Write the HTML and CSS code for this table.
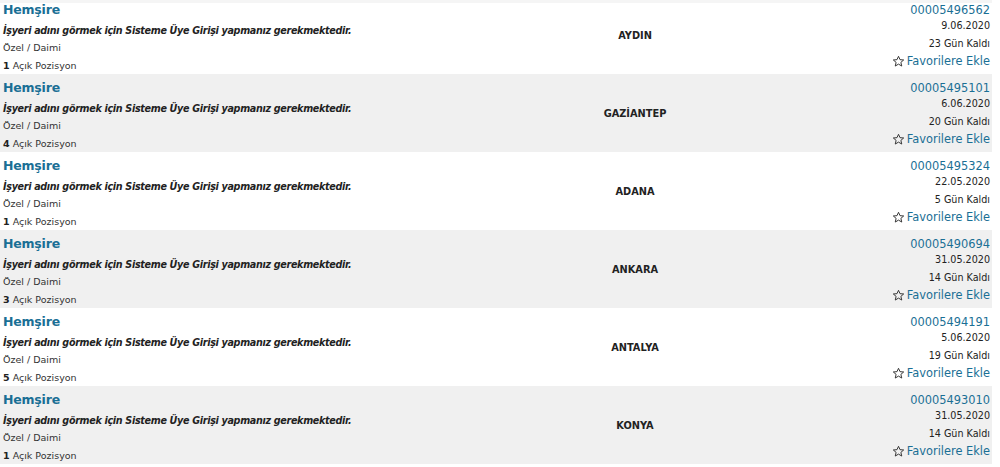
FILE: index.html
```html
<!DOCTYPE html>
<html lang="tr">
<head>
<meta charset="utf-8">
<link rel="stylesheet" href="styles.css">
</head>
<body>
<div class="list">
  <div class="row">
    <div class="info">
      <a class="title">Hemşire</a>
      <div class="firm">İşyeri adını görmek için Sisteme Üye Girişi yapmanız gerekmektedir.</div>
      <div class="meta">Özel / Daimi</div>
      <div class="meta"><b>1</b> Açık Pozisyon</div>
    </div>
    <div class="city">AYDIN</div>
    <div class="side">
      <a class="num">00005496562</a>
      <div class="small date">9.06.2020</div>
      <div class="small left">23 Gün Kaldı</div>
      <a class="fav"><svg class="star" viewBox="0 0 12 12"><path d="M6 1.2 7.4 4.3 10.8 4.6 8.2 6.8 9 10.2 6 8.4 3 10.2 3.8 6.8 1.2 4.6 4.6 4.3Z"/></svg>Favorilere Ekle</a>
    </div>
  </div>
  <div class="row alt">
    <div class="info">
      <a class="title">Hemşire</a>
      <div class="firm">İşyeri adını görmek için Sisteme Üye Girişi yapmanız gerekmektedir.</div>
      <div class="meta">Özel / Daimi</div>
      <div class="meta"><b>4</b> Açık Pozisyon</div>
    </div>
    <div class="city">GAZİANTEP</div>
    <div class="side">
      <a class="num">00005495101</a>
      <div class="small date">6.06.2020</div>
      <div class="small left">20 Gün Kaldı</div>
      <a class="fav"><svg class="star" viewBox="0 0 12 12"><path d="M6 1.2 7.4 4.3 10.8 4.6 8.2 6.8 9 10.2 6 8.4 3 10.2 3.8 6.8 1.2 4.6 4.6 4.3Z"/></svg>Favorilere Ekle</a>
    </div>
  </div>
  <div class="row">
    <div class="info">
      <a class="title">Hemşire</a>
      <div class="firm">İşyeri adını görmek için Sisteme Üye Girişi yapmanız gerekmektedir.</div>
      <div class="meta">Özel / Daimi</div>
      <div class="meta"><b>1</b> Açık Pozisyon</div>
    </div>
    <div class="city">ADANA</div>
    <div class="side">
      <a class="num">00005495324</a>
      <div class="small date">22.05.2020</div>
      <div class="small left">5 Gün Kaldı</div>
      <a class="fav"><svg class="star" viewBox="0 0 12 12"><path d="M6 1.2 7.4 4.3 10.8 4.6 8.2 6.8 9 10.2 6 8.4 3 10.2 3.8 6.8 1.2 4.6 4.6 4.3Z"/></svg>Favorilere Ekle</a>
    </div>
  </div>
  <div class="row alt">
    <div class="info">
      <a class="title">Hemşire</a>
      <div class="firm">İşyeri adını görmek için Sisteme Üye Girişi yapmanız gerekmektedir.</div>
      <div class="meta">Özel / Daimi</div>
      <div class="meta"><b>3</b> Açık Pozisyon</div>
    </div>
    <div class="city">ANKARA</div>
    <div class="side">
      <a class="num">00005490694</a>
      <div class="small date">31.05.2020</div>
      <div class="small left">14 Gün Kaldı</div>
      <a class="fav"><svg class="star" viewBox="0 0 12 12"><path d="M6 1.2 7.4 4.3 10.8 4.6 8.2 6.8 9 10.2 6 8.4 3 10.2 3.8 6.8 1.2 4.6 4.6 4.3Z"/></svg>Favorilere Ekle</a>
    </div>
  </div>
  <div class="row">
    <div class="info">
      <a class="title">Hemşire</a>
      <div class="firm">İşyeri adını görmek için Sisteme Üye Girişi yapmanız gerekmektedir.</div>
      <div class="meta">Özel / Daimi</div>
      <div class="meta"><b>5</b> Açık Pozisyon</div>
    </div>
    <div class="city">ANTALYA</div>
    <div class="side">
      <a class="num">00005494191</a>
      <div class="small date">5.06.2020</div>
      <div class="small left">19 Gün Kaldı</div>
      <a class="fav"><svg class="star" viewBox="0 0 12 12"><path d="M6 1.2 7.4 4.3 10.8 4.6 8.2 6.8 9 10.2 6 8.4 3 10.2 3.8 6.8 1.2 4.6 4.6 4.3Z"/></svg>Favorilere Ekle</a>
    </div>
  </div>
  <div class="row alt">
    <div class="info">
      <a class="title">Hemşire</a>
      <div class="firm">İşyeri adını görmek için Sisteme Üye Girişi yapmanız gerekmektedir.</div>
      <div class="meta">Özel / Daimi</div>
      <div class="meta"><b>1</b> Açık Pozisyon</div>
    </div>
    <div class="city">KONYA</div>
    <div class="side">
      <a class="num">00005493010</a>
      <div class="small date">31.05.2020</div>
      <div class="small left">14 Gün Kaldı</div>
      <a class="fav"><svg class="star" viewBox="0 0 12 12"><path d="M6 1.2 7.4 4.3 10.8 4.6 8.2 6.8 9 10.2 6 8.4 3 10.2 3.8 6.8 1.2 4.6 4.6 4.3Z"/></svg>Favorilere Ekle</a>
    </div>
  </div>
</div>
</body>
</html>
```
FILE: styles.css
```css
html, body {
  margin: 0;
  padding: 0;
  background: #fff;
  overflow: hidden;
}
body {
  font-family: "DejaVu Sans", Verdana, sans-serif;
  color: #222;
}
.list {
  width: 992px;
  margin-top: -4px;
}
.row {
  display: grid;
  grid-template-columns: 560px 150px 1fr;
  height: 78px;
  box-sizing: border-box;
  background: #fff;
}
.row:first-child {
  box-shadow: inset 0 7px 0 #f5f5f5;
}
.row.alt {
  background: #f0f0f0;
}
.info {
  padding: 5px 0 0 3px;
  display: flex;
  flex-direction: column;
}
.title {
  font-size: 12.5px;
  letter-spacing: -0.2px;
  font-weight: bold;
  color: #1a6f95;
  line-height: 18px;
  height: 21px;
}
.firm {
  font-size: 9.6px;
  font-weight: bold;
  font-style: italic;
  color: #222;
  line-height: 17px;
  letter-spacing: -0.32px;
}
.meta {
  font-size: 9.5px;
  color: #333;
  line-height: 17.5px;
}
.meta b {
  color: #222;
}
.city {
  display: flex;
  align-items: center;
  justify-content: center;
  font-size: 9.8px;
  font-weight: bold;
  color: #222;
  padding-top: 1px;
}
.side {
  display: flex;
  flex-direction: column;
  align-items: flex-end;
  padding: 7px 2px 0 0;
}
.num {
  font-size: 11.4px;
  color: #1a6f95;
  line-height: 14px;
  height: 14px;
}
.small {
  font-size: 9.6px;
  color: #222;
}
.date {
  line-height: 16px;
  margin-top: 1px;
}
.left {
  line-height: 18px;
  margin-top: 1px;
}
.fav {
  display: flex;
  align-items: center;
  gap: 2px;
  font-size: 11.4px;
  color: #1a6f95;
  line-height: 16px;
}
.star {
  width: 13px;
  height: 13px;
  fill: none;
  stroke: #333;
  stroke-width: 0.9;
  stroke-linejoin: round;
}
```
